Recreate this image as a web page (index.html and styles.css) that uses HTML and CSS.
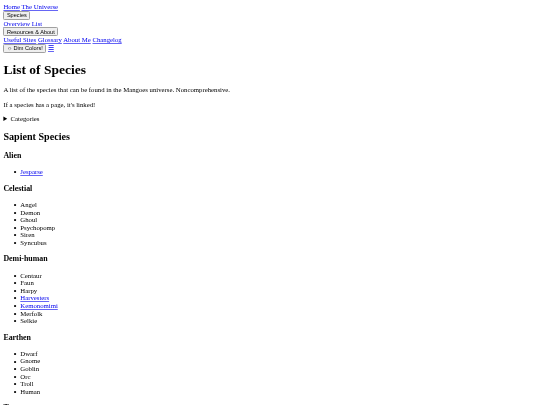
FILE: index.html
```html
<!DOCTYPE html>
<html lang="en">
  <head>
    <meta charset="UTF-8" />
    <meta name="viewport" content="width=device-width, initial-scale=1.0" />
    <title>List of Species</title>
    <link rel="stylesheet" href="styles.css">
  </head>
  <body>
    <nav class="site-nav">
      <div><a href="#">Home</a> <a href="#">The Universe</a></div>
      <div><button>Species</button></div>
      <div><a href="#">Overview</a> <a href="#">List</a></div>
      <div><button>Resources &amp; About</button></div>
      <div><a href="#">Useful Sites</a> <a href="#">Glossary</a> <a href="#">About Me</a> <a href="#">Changelog</a></div>
      <div><button>☼ Dim Colors!</button> <a href="#">☰</a></div>
    </nav>

    <h1>List of Species</h1>
    <p>A list of the species that can be found in the Mangoes universe. Noncomprehensive.</p>
    <p>If a species has a page, it's linked!</p>

    <details>
      <summary>Categories</summary>
    </details>

    <h2>Sapient Species</h2>

    <h3>Alien</h3>
    <ul>
      <li><a href="#">Jesparse</a></li>
    </ul>

    <h3>Celestial</h3>
    <ul>
      <li>Angel</li>
      <li>Demon</li>
      <li>Ghoul</li>
      <li>Psychopomp</li>
      <li>Siren</li>
      <li>Syncubus</li>
    </ul>

    <h3>Demi-human</h3>
    <ul>
      <li>Centaur</li>
      <li>Faun</li>
      <li>Harpy</li>
      <li><a href="#">Harvesters</a></li>
      <li><a href="#">Kemonomimi</a></li>
      <li>Merfolk</li>
      <li>Selkie</li>
    </ul>

    <h3>Earthen</h3>
    <ul>
      <li>Dwarf</li>
      <li>Gnome</li>
      <li>Goblin</li>
      <li>Orc</li>
      <li>Troll</li>
      <li>Human</li>
    </ul>

    <h3>Terran</h3>
  </body>
</html>
```

FILE: styles.css
```css
body {
  margin: 3.4px;
  font-family: 'Liberation Serif', serif;
  font-size: 6.75px;
  line-height: 7.6px;
  color: #000;
  background: #fff;
  filter: blur(0.35px);
}

a {
  color: #00e;
  text-decoration-color: rgba(0, 0, 238, 0.6);
}

button {
  box-sizing: border-box;
  height: 8.9px;
  padding: 0 2.5px;
  border: 1px solid #a0a0a0;
  border-radius: 1.3px;
  background: #efefef;
  color: #000;
  font-family: 'Liberation Sans', sans-serif;
  font-size: 5.6px;
  line-height: 6.3px;
}

h1 {
  margin: 9px 0;
  font-size: 13.5px;
  line-height: 15.6px;
}

h2 {
  margin: 8.4px 0;
  font-size: 10.1px;
  line-height: 11.6px;
}

h3 {
  margin: 7.9px 0;
  font-size: 7.9px;
  line-height: 9.3px;
}

p {
  margin: 6.75px 0;
}

ul {
  margin: 6.75px 0;
  padding-left: 16.9px;
  list-style: none;
}

li {
  position: relative;
}

li::before {
  content: "•";
  position: absolute;
  left: -6.8px;
  top: 1.1px;
  font-size: 9px;
}
```
